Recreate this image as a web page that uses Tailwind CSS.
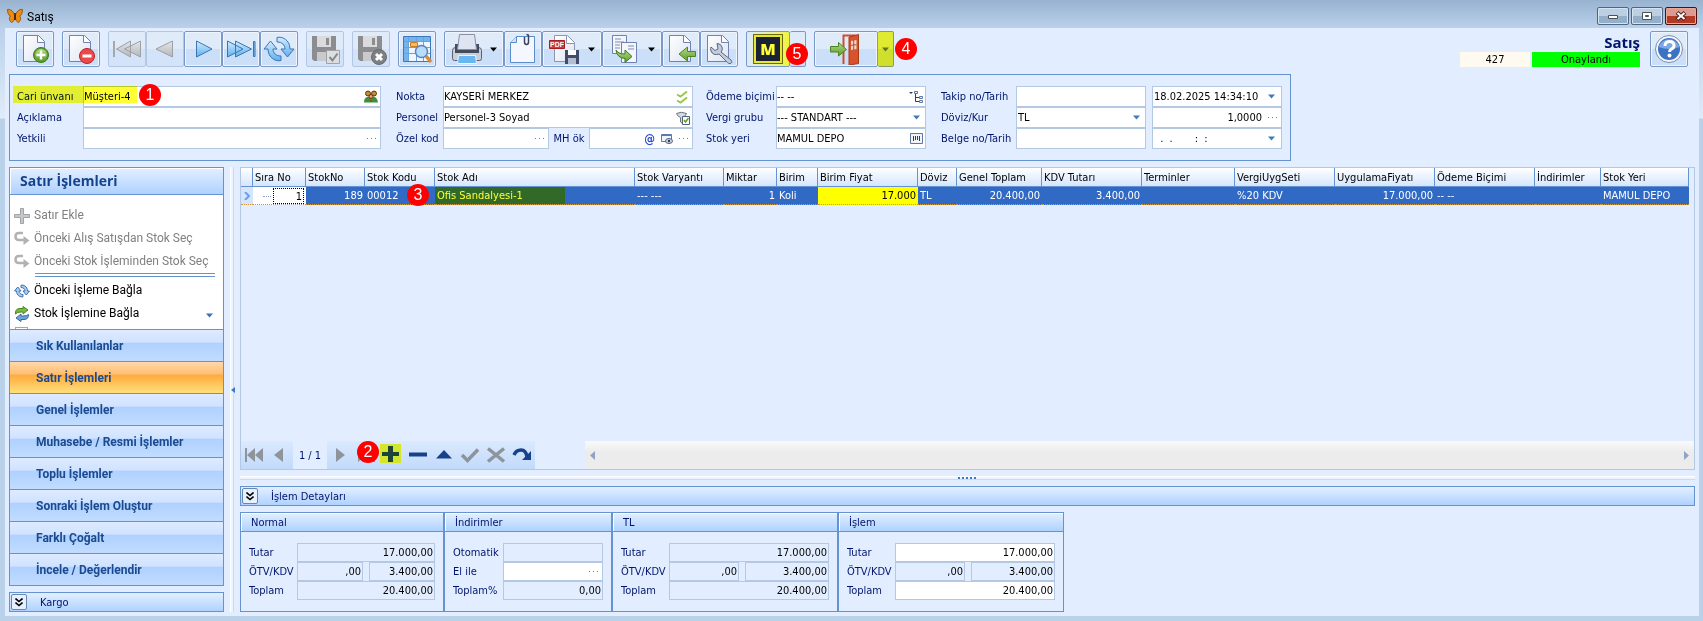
<!DOCTYPE html>
<html lang="tr">
<head>
    <meta charset="UTF-8">
    <meta name="viewport" content="width=device-width, initial-scale=1.0">
    <title>Satış</title>
    <script src="https://cdn.jsdelivr.net/npm/@tailwindcss/browser@4"></script>
</head>
<body class="min-h-screen flex flex-col bg-[linear-gradient(#bad1ea_28px,#dfebf9_118px,#bad1ea_119px)] font-['DejaVu_Sans_Condensed','DejaVu_Sans',sans-serif] text-[11px] leading-4 text-black">
    <!-- Icon definitions used more than once -->
    <svg class="absolute w-0 h-0">
        <defs>
            <linearGradient id="gBlue" x1="0" y1="0" x2="0" y2="1"><stop offset="0" stop-color="#d4ecfd"/><stop offset="1" stop-color="#5cb0ee"/></linearGradient>
            <linearGradient id="gGray" x1="0" y1="0" x2="0" y2="1"><stop offset="0" stop-color="#e4e6e8"/><stop offset="1" stop-color="#b4b7ba"/></linearGradient>
            <linearGradient id="gPage" x1="0" y1="0" x2="1" y2="1"><stop offset="0" stop-color="#ffffff"/><stop offset="1" stop-color="#dde3f0"/></linearGradient>
            <linearGradient id="gGreen" x1="0" y1="0" x2="0" y2="1"><stop offset="0" stop-color="#b5dc86"/><stop offset="1" stop-color="#5c9a2c"/></linearGradient>
            <symbol id="page" viewBox="0 0 32 32"><path d="M4.500 2.500h15l6 6v20h-21z" fill="url(#gPage)" stroke="#6f82b0"/><path d="M18.500 2.500v7h7" fill="#fff" stroke="#6f82b0"/></symbol>
            <symbol id="down" viewBox="0 0 7 5"><path d="M0 0.500h7L3.500 4.500z"/></symbol>
            <symbol id="dots" viewBox="0 0 9 3"><path d="M0 1h1v1h-1zM4 1h1v1h-1zM8 1h1v1h-1z"/></symbol>
            <symbol id="chev" viewBox="0 0 8 9"><path d="M0.500 0.500l3.500 3 3.500-3M0.500 4.500l3.500 3 3.500-3" fill="none" stroke="#000" stroke-width="1.600"/></symbol>
            <symbol id="disk" viewBox="0 0 32 32"><path d="M3 3h24v25H5l-2-2z" fill="#8b8d90"/><path d="M8 3h14v11H8z" fill="#d9dbdd"/><path d="M17 5h3v7h-3z" fill="#8b8d90"/><path d="M8 19h15v9H8z" fill="#c8cacc"/></symbol>
        </defs>
    </svg>

    <!-- Title bar -->
    <header class="h-7 flex items-center justify-between pl-[7px] pr-1 bg-linear-to-b from-[#98b3d0] to-[#bad1ea]">
        <div class="flex items-center gap-1 pt-1">
            <svg class="w-4 h-4" viewBox="0 0 16 16"><path d="M7.500 7C6 2 2 1 0.500 1.500c0 3 1 6 3 6.500-2 1.500-1 5 1 6.500 2-0.500 3-3 3-5zM8.500 7c1.500-5 5.500-6 7-5.500 0 3-1 6-3 6.500 2 1.500 1 5-1 6.500-2-0.500-3-3-3-5z" fill="#ee8c10" stroke="#8a4504" stroke-width="0.800"/><path d="M8 5v7" stroke="#3a1a00" stroke-width="1.500"/></svg>
            <h1 class="font-['Roboto',sans-serif] text-xs pt-0.5">Satış</h1>
        </div>
        <div class="flex gap-0.5 pt-1 pr-0.5">
            <button aria-label="Küçült" class="w-8 h-[18px] flex items-center justify-center rounded-xs border border-[#4f6580] shadow-[inset_0_0_0_1px_#d5e3f2] bg-linear-to-b from-[#bccfe3] from-50% to-[#93afca] to-50%"><svg class="w-3 h-2" viewBox="0 0 12 8"><path d="M1.500 3.500h9v3h-9z" fill="#fff" stroke="#4c5156"/></svg></button>
            <button aria-label="Ekranı kapla" class="w-8 h-[18px] flex items-center justify-center rounded-xs border border-[#4f6580] shadow-[inset_0_0_0_1px_#d5e3f2] bg-linear-to-b from-[#bccfe3] from-50% to-[#93afca] to-50%"><svg class="w-3 h-3" viewBox="0 0 12 12"><path d="M1.500 2.500h9v7h-9z" fill="#fff" stroke="#4c5156"/><path d="M4.500 5.500h3v1h-3z" fill="none" stroke="#4c5156"/></svg></button>
            <button aria-label="Kapat" class="w-8 h-[18px] flex items-center justify-center rounded-xs border border-[#4b1010] shadow-[inset_0_0_0_1px_#e9a79b] bg-linear-to-b from-[#dd9a8e] from-50% to-[#b23a23] to-50%"><svg class="w-3 h-3" viewBox="0 0 12 12"><path d="M2 2.500l8 7M10 2.500l-8 7" stroke="#4b2020" stroke-width="4"/><path d="M2.500 3l7 6M9.500 3l-7 6" stroke="#fff" stroke-width="2"/></svg></button>
        </div>
    </header>

    <main class="flex-1 flex flex-col mx-[5px] mb-[5px] mr-1 px-1 bg-[#e2eeff]">
        <!-- Toolbar -->
        <div class="flex items-start justify-between pt-[3px] pl-[7px] pr-[7px]">
            <div class="flex gap-2">
                <button aria-label="Yeni" class="w-[38px] h-9 flex items-center justify-center rounded-xs border border-[#7b99c6] shadow-[inset_0_0_0_1px_#eef5ff] bg-linear-to-b from-[#e0ebfa] from-50% to-[#cbdff9] to-50%">
                    <svg class="w-8 h-8" viewBox="0 0 32 32"><use href="#page"/><circle cx="22" cy="22" r="7.500" fill="#5da032" stroke="#3d7a18"/><circle cx="22" cy="22" r="6" fill="url(#gGreen)"/><path d="M22 17.500v9M17.500 22h9" stroke="#fff" stroke-width="2.500"/></svg>
                </button>
                <button aria-label="Sil" class="w-[38px] h-9 flex items-center justify-center rounded-xs border border-[#7b99c6] shadow-[inset_0_0_0_1px_#eef5ff] bg-linear-to-b from-[#e0ebfa] from-50% to-[#cbdff9] to-50%">
                    <svg class="w-8 h-8" viewBox="0 0 32 32"><use href="#page"/><circle cx="22" cy="23" r="7.500" fill="#ea4a4a" stroke="#c02020"/><path d="M17.500 23h9" stroke="#fff" stroke-width="3"/></svg>
                </button>
                <div class="flex">
                    <button aria-label="İlk" class="w-[38px] h-9 flex items-center justify-center rounded-xs border border-[#b4c7e2] bg-linear-to-b from-[#e0ebfa] from-50% to-[#d3e3fa] to-50%">
                        <svg class="w-8 h-8" viewBox="0 0 32 32"><path d="M2 8h2v16h-2z" fill="#a5a8ab"/><path d="M19.500 8v16L5.500 16zM29.500 8v16L13.500 16z" fill="url(#gGray)" stroke="#9da0a3"/></svg>
                    </button>
                    <button aria-label="Önceki" class="w-[38px] h-9 flex items-center justify-center rounded-xs border border-[#b4c7e2] bg-linear-to-b from-[#e0ebfa] from-50% to-[#d3e3fa] to-50%">
                        <svg class="w-8 h-8" viewBox="0 0 32 32"><path d="M23.500 8v16L7 16z" fill="url(#gGray)" stroke="#9da0a3"/></svg>
                    </button>
                    <button aria-label="Sonraki" class="w-[38px] h-9 flex items-center justify-center rounded-xs border border-[#7b99c6] shadow-[inset_0_0_0_1px_#eef5ff] bg-linear-to-b from-[#e0ebfa] from-50% to-[#cbdff9] to-50%">
                        <svg class="w-8 h-8" viewBox="0 0 32 32"><path d="M9.500 8v16L25 16z" fill="url(#gBlue)" stroke="#3c74b4"/></svg>
                    </button>
                    <button aria-label="Son" class="w-[38px] h-9 flex items-center justify-center rounded-xs border border-[#7b99c6] shadow-[inset_0_0_0_1px_#eef5ff] bg-linear-to-b from-[#e0ebfa] from-50% to-[#cbdff9] to-50%">
                        <svg class="w-8 h-8" viewBox="0 0 32 32"><path d="M2.500 8v16L18 16zM10.500 8v16L26.500 16z" fill="url(#gBlue)" stroke="#3c74b4"/><path d="M28.500 8.500h1.500v15h-1.500z" fill="#8cc6f2" stroke="#3c74b4"/></svg>
                    </button>
                    <button aria-label="Yenile" class="w-[38px] h-9 flex items-center justify-center rounded-xs border border-[#7b99c6] shadow-[inset_0_0_0_1px_#eef5ff] bg-linear-to-b from-[#e0ebfa] from-50% to-[#cbdff9] to-50%">
                        <svg class="w-8 h-8" viewBox="0 0 32 32"><g fill="url(#gBlue)" stroke="#3c74b4"><path d="M14 4.500C19 3 27 7 27 16h4l-6.500 8L18 16h4c0-4-3-7-8-7z"/><path d="M18 27.500C13 29 5 25 5 16H1L7.500 8 14 16h-4c0 4 3 7 8 7z"/></g></svg>
                    </button>
                </div>
                <button aria-label="Kaydet" class="w-[38px] h-9 flex items-center justify-center rounded-xs border border-[#b4c7e2] bg-linear-to-b from-[#e0ebfa] from-50% to-[#d3e3fa] to-50%">
                    <svg class="w-8 h-8" viewBox="0 0 32 32"><use href="#disk"/><path d="M17.500 17.500h13v13h-13z" fill="#dcdee0" stroke="#a0a3a6"/><path d="M20.500 24l3 3.500 5-7" fill="none" stroke="#85888b" stroke-width="2"/></svg>
                </button>
                <button aria-label="Vazgeç" class="w-[38px] h-9 flex items-center justify-center rounded-xs border border-[#b4c7e2] bg-linear-to-b from-[#e0ebfa] from-50% to-[#d3e3fa] to-50%">
                    <svg class="w-8 h-8" viewBox="0 0 32 32"><use href="#disk"/><circle cx="24" cy="24" r="7.500" fill="#7d8083" stroke="#696c6f"/><path d="M21 21l6 6M27 21l-6 6" stroke="#fff" stroke-width="3"/></svg>
                </button>
                <button aria-label="Liste" class="w-[38px] h-9 flex items-center justify-center rounded-xs border border-[#7b99c6] shadow-[inset_0_0_0_1px_#eef5ff] bg-linear-to-b from-[#e0ebfa] from-50% to-[#cbdff9] to-50%">
                    <svg class="w-8 h-8" viewBox="0 0 32 32"><path d="M2.500 3.500h27v25h-27z" fill="#eef6ff" stroke="#3d78bd"/><path d="M3 4h26v4H3zM3 8h4v20H3z" fill="#72b4ee"/><path d="M3 8.500h26M3 14.500h26M3 20.500h26M7.500 4v24M15.500 4v24M22.500 4v24" stroke="#6ba2dc"/><path d="M9.500 9.500h7v4h-7z" fill="#f8bd62" stroke="#c8801c"/><path d="M25 23l5 6" stroke="#d98c32" stroke-width="3.500"/><circle cx="20.500" cy="18.500" r="6" fill="#b8dcfb" stroke="#5a83c0" stroke-width="1.500"/></svg>
                </button>
                <div class="flex">
                    <button aria-label="Yazdır" class="w-[60px] h-9 flex items-center justify-between pl-1.5 pr-1.5 rounded-xs border border-[#7b99c6] shadow-[inset_0_0_0_1px_#eef5ff] bg-linear-to-b from-[#e0ebfa] from-50% to-[#cbdff9] to-50%">
                        <svg class="w-8 h-8" viewBox="0 0 32 32"><path d="M1.500 17.500q0-3 3-3h23q3 0 3 3v8q0 2-2 2h-25q-2 0-2-2z" fill="#c9cfda" stroke="#5a6070"/><path d="M4 11h24v9H4z" fill="#434b5e"/><path d="M8.500 1.500h15l2 15H6.500z" fill="#dfe5f0" stroke="#8890a8"/><path d="M7.500 22.500h17l1 8h-19z" fill="#68b6f2" stroke="#eaf2fc"/></svg>
                        <svg class="w-[7px] h-[5px]" viewBox="0 0 7 5"><use href="#down"/></svg>
                    </button>
                    <button aria-label="Ekler" class="w-[38px] h-9 flex items-center justify-center rounded-xs border border-[#7b99c6] shadow-[inset_0_0_0_1px_#eef5ff] bg-linear-to-b from-[#e0ebfa] from-50% to-[#cbdff9] to-50%">
                        <svg class="w-8 h-8" viewBox="0 0 32 32"><path d="M9.500 3.500h18v26h-24v-20z" fill="#f4f8fe" stroke="#5b8ccb"/><path d="M3.500 9.500h6v-6" fill="#cfe2f8" stroke="#5b8ccb"/><path d="M17.500 4v5q0 2.500 2 2.500t2-2.500V3q0-1.500-2-1.500" fill="none" stroke="#39435c" stroke-width="1.500"/></svg>
                    </button>
                    <button aria-label="PDF kaydet" class="w-[60px] h-9 flex items-center justify-between pl-1 pr-1.5 rounded-xs border border-[#7b99c6] shadow-[inset_0_0_0_1px_#eef5ff] bg-linear-to-b from-[#e0ebfa] from-50% to-[#cbdff9] to-50%">
                        <svg class="w-8 h-8" viewBox="0 0 32 32"><path d="M7.500 2.500h13l7 7v19h-20z" fill="url(#gPage)" stroke="#8a96b4"/><path d="M19.500 2.500v8h8" fill="#fff" stroke="#8a96b4"/><path d="M2.500 7.500h15v8h-15z" fill="#d23c38" stroke="#a81e1e"/><text x="3" y="14" font-size="7" font-weight="bold" fill="#fff" font-family="Liberation Sans">PDF</text><path d="M18 17h14v14H18z" fill="#3f4c6c"/><path d="M21 17h8v5h-8z" fill="#fff"/><path d="M21 25h8v6h-8z" fill="#b4bdd0"/></svg>
                        <svg class="w-[7px] h-[5px]" viewBox="0 0 7 5"><use href="#down"/></svg>
                    </button>
                    <button aria-label="Kopyala" class="w-[60px] h-9 flex items-center justify-between pl-1.5 pr-1.5 rounded-xs border border-[#7b99c6] shadow-[inset_0_0_0_1px_#eef5ff] bg-linear-to-b from-[#e0ebfa] from-50% to-[#cbdff9] to-50%">
                        <svg class="w-8 h-8" viewBox="0 0 32 32"><path d="M3.500 2.500h14v18h-14z" fill="#f3f6fc" stroke="#6f82b0"/><path d="M6 6h6M6 9h9M6 12h5M6 15h5" stroke="#7d8db5"/><path d="M12.500 9.500h15v20h-15z" fill="#f3f6fc" stroke="#6f82b0"/><path d="M19 13h6M19 16h6" stroke="#7d8db5"/><path d="M7 17q2 4 9 4v-4l7 6.500-7 6v-4Q8 25 7 17z" fill="url(#gGreen)" stroke="#3f7a1e"/></svg>
                        <svg class="w-[7px] h-[5px]" viewBox="0 0 7 5"><use href="#down"/></svg>
                    </button>
                    <button aria-label="Geri al" class="w-[38px] h-9 flex items-center justify-center rounded-xs border border-[#7b99c6] shadow-[inset_0_0_0_1px_#eef5ff] bg-linear-to-b from-[#e0ebfa] from-50% to-[#cbdff9] to-50%">
                        <svg class="w-8 h-8" viewBox="0 0 32 32"><use href="#page"/><path d="M30.500 18.500v5h-8v4.500L14 21l8.500-7v4.500z" fill="url(#gGreen)" stroke="#4a8524"/></svg>
                    </button>
                    <button aria-label="Ayarlar" class="w-[38px] h-9 flex items-center justify-center rounded-xs border border-[#7b99c6] shadow-[inset_0_0_0_1px_#eef5ff] bg-linear-to-b from-[#e0ebfa] from-50% to-[#cbdff9] to-50%">
                        <svg class="w-8 h-8" viewBox="0 0 32 32"><use href="#page"/><path d="M14 10.500q4 0 5 3.500t-1 5l10 8q2 3-1 3.500-2 0-2.500-1L16 21q-6 2-8-3-1-3 0-4l4 3.500 3-1.500-.5-3z" fill="#c3ccdb" stroke="#5b6880"/></svg>
                    </button>
                </div>
                <!-- M button with its drop-down half -->
                <div class="relative flex">
                    <button aria-label="M" class="w-11 h-9 flex items-center justify-center rounded-xs border border-[#7b99c6] bg-linear-to-r from-[#dde9fb] from-1 to-[#f0f42c] to-1">
                        <span class="w-[30px] h-[30px] flex items-center justify-center border border-[#6b6c10] bg-[#1a2233] outline-2 -outline-offset-3 outline-[#e8e830] font-['Noto_Sans',sans-serif] text-base font-black text-[#ffff33]">M</span>
                    </button>
                    <button aria-label="M seçenekleri" class="w-4 h-9 rounded-xs border border-l-0 border-[#7b99c6] bg-linear-to-b from-[#e0ebfa] from-50% to-[#cbdff9] to-50%"></button>
                    <span class="absolute left-10 top-3 w-[22px] h-[22px] rounded-full bg-[#ff0000] text-white text-base leading-[22px] text-center font-['Liberation_Sans',sans-serif]">5</span>
                </div>
                <!-- Exit button with its drop-down half -->
                <div class="relative flex">
                    <button aria-label="Çıkış" class="w-16 h-9 flex items-center justify-end pr-4 rounded-xs border border-[#7b99c6] shadow-[inset_0_0_0_1px_#eef5ff] bg-linear-to-b from-[#e0ebfa] from-50% to-[#cbdff9] to-50%">
                        <svg class="w-8 h-8" viewBox="0 0 32 32"><path d="M14.500 31V2.500h12" fill="none" stroke="#c9502c" stroke-width="2"/><path d="M20 4l9.500-2.500v29L20 32z" fill="#d9522c" stroke="#a83a18"/><path d="M22 8l5.500-1v9L22 17z" fill="#f2d8c8"/><path d="M24.700 7v10M22 12.300l5.500-.6" stroke="#b8472a"/><path d="M1.500 13.500h8V9.500L17.500 16.500 9.500 23v-4h-8z" fill="url(#gGreen)" stroke="#4a8524"/></svg>
                    </button>
                    <button aria-label="Çıkış seçenekleri" class="w-4 h-9 flex items-center justify-center rounded-xs border border-l-0 border-[#8a9a60] bg-linear-to-b from-[#e0ea30] from-50% to-[#cfe02c] to-50%"><svg class="w-[7px] h-[5px] fill-[#5c7330]" viewBox="0 0 7 5"><use href="#down"/></svg></button>
                    <span class="absolute left-[81px] top-[7px] w-[22px] h-[22px] rounded-full bg-[#ff0000] text-white text-base leading-[22px] text-center font-['Liberation_Sans',sans-serif]">4</span>
                </div>
            </div>

            <!-- Document state and help -->
            <div class="flex gap-2.5">
                <div class="flex flex-col items-end pt-0.5">
                    <h2 class="font-['Open_Sans',sans-serif] text-[15px] leading-[19px] font-bold text-[#00146e]">Satış</h2>
                    <div class="flex gap-0.5">
                        <span class="w-[70px] h-[15px] leading-4 text-center bg-[#fffaf0]">427</span>
                        <span class="w-[108px] h-[15px] leading-4 text-center bg-[#00ff00]">Onaylandı</span>
                    </div>
                </div>
                <button aria-label="Yardım" class="w-[38px] h-9 flex items-center justify-center rounded-xs border border-[#7b99c6] shadow-[inset_0_0_0_1px_#eef5ff] bg-linear-to-b from-[#e0ebfa] from-50% to-[#cbdff9] to-50%">
                    <svg class="w-8 h-8" viewBox="0 0 32 32"><circle cx="16" cy="16" r="13.500" fill="#f4f7fc" stroke="#7c8db0"/><circle cx="16" cy="16" r="11" fill="#3c72c4"/><path d="M5.500 14a11 11 0 0 1 21 0q-10 4-21 0z" fill="#7da8e4"/><path d="M12 13q0-4.500 4.500-4.500T21 12.500q0 2.500-2.500 3.500-2 1-2 3" fill="none" stroke="#fff" stroke-width="3"/><circle cx="16.500" cy="22.500" r="2" fill="#fff"/></svg>
                </button>
            </div>
        </div>

        <!-- Document header form -->
        <form class="self-start mt-[7px] h-[87px] flex gap-[15px] border border-[#6593cf] pt-[11px] pl-[7px] pr-2">
            <div class="relative grid grid-cols-[66px_298px] auto-rows-[21px] content-start items-center">
                <label for="cari" class="text-[#00146e]">Cari ünvanı</label>
                <div class="h-[21px] flex items-center border border-[#b4c8e4] bg-white pr-0.5">
                    <input id="cari" value="Müşteri-4" class="flex-1 min-w-0 outline-none">
                    <svg class="w-[14px] h-[14px]" viewBox="0 0 14 14"><circle cx="4" cy="3.500" r="2.500" fill="#c98a3c" stroke="#5a3a10"/><circle cx="10" cy="3.500" r="2.500" fill="#c98a3c" stroke="#5a3a10"/><path d="M0 12.500q0-5.500 4-5.500t3 5.500zM7 12.500q0-5.500 3-5.500t4 5.500z" fill="#3f8f3a"/><circle cx="7" cy="6.500" r="2" fill="#e0a85a" stroke="#5a3a10"/><path d="M6 12q0-3 1-3t1 3z" fill="#b23c2c"/></svg>
                </div>
                <label for="aciklama" class="text-[#00146e]">Açıklama</label>
                <input id="aciklama" class="h-[21px] border border-[#b4c8e4] bg-white outline-none">
                <label for="yetkili" class="text-[#00146e]">Yetkili</label>
                <div class="h-[21px] flex items-center border border-[#b4c8e4] bg-white pr-1">
                    <input id="yetkili" class="flex-1 min-w-0 outline-none">
                    <svg class="w-[9px] h-[3px] fill-[#5d7fb5]" viewBox="0 0 9 3"><use href="#dots"/></svg>
                </div>
                <!-- Highlighter over the customer field -->
                <span class="absolute -left-1 top-0 w-[124px] h-[17px] bg-[#ffff33] mix-blend-multiply"></span>
                <span class="absolute left-[122px] -top-[2px] w-[22px] h-[22px] rounded-full bg-[#ff0000] text-white text-base leading-[22px] text-center font-['Liberation_Sans',sans-serif]">1</span>
            </div>

            <div class="grid grid-cols-[47px_250px] auto-rows-[21px] content-start items-center">
                <label for="nokta" class="text-[#00146e]">Nokta</label>
                <div class="h-[21px] flex items-center border border-[#b4c8e4] bg-white pr-1">
                    <input id="nokta" value="KAYSERİ MERKEZ" class="flex-1 min-w-0 outline-none">
                    <svg class="w-3 h-[14px]" viewBox="0 0 12 14"><path d="M1 4.500l3.500 2L11 1.500M1 10.500l3.500 2L11 7.500" fill="none" stroke="#9cc552" stroke-width="2"/></svg>
                </div>
                <label for="personel" class="text-[#00146e]">Personel</label>
                <div class="h-[21px] flex items-center border border-[#b4c8e4] bg-white pr-0.5">
                    <input id="personel" value="Personel-3 Soyad" class="flex-1 min-w-0 outline-none">
                    <svg class="w-[14px] h-[14px]" viewBox="0 0 14 14"><path d="M0.500 2.500Q5 0 10.500 2.500 10 5 6.500 6.500v6L4.500 11V6.500Q1 5 0.500 2.500z" fill="#d8dce2" stroke="#6d7480"/><path d="M6.500 5.500h7v8h-7z" fill="#fff" stroke="#50617c"/><path d="M8 9l1.500 2 3-4" fill="none" stroke="#5fa01f" stroke-width="1.500"/></svg>
                </div>
                <label for="ozelkod" class="text-[#00146e]">Özel kod</label>
                <div class="flex items-center justify-between">
                    <div class="w-[106px] h-[21px] flex items-center border border-[#b4c8e4] bg-white pr-1">
                        <input id="ozelkod" class="flex-1 min-w-0 outline-none">
                        <svg class="w-[9px] h-[3px] fill-[#5d7fb5]" viewBox="0 0 9 3"><use href="#dots"/></svg>
                    </div>
                    <label for="mhok" class="text-[#00146e]">MH ök</label>
                    <div class="w-[104px] h-[21px] flex items-center gap-[6px] border border-[#b4c8e4] bg-white pr-1">
                        <input id="mhok" class="flex-1 min-w-0 outline-none">
                        <span class="text-xs font-bold text-[#2a4bd0]">@</span>
                        <svg class="w-3 h-3" viewBox="0 0 12 12"><path d="M0.500 1.500h10v7h-10z" fill="#eef4fc" stroke="#5c7ba8"/><path d="M1 1h9v2H1z" fill="#5c7ba8"/><ellipse cx="8" cy="8" rx="3.500" ry="2.500" fill="#d0d8e4" stroke="#4d6484"/><circle cx="8" cy="8" r="1.200" fill="#30405c"/></svg>
                        <svg class="w-[9px] h-[3px] fill-[#5d7fb5]" viewBox="0 0 9 3"><use href="#dots"/></svg>
                    </div>
                </div>
            </div>

            <div class="-ml-0.5 grid grid-cols-[70px_150px] auto-rows-[21px] content-start items-center">
                <label for="odeme" class="text-[#00146e] whitespace-nowrap">Ödeme biçimi</label>
                <div class="h-[21px] flex items-center border border-[#b4c8e4] bg-white pr-0.5">
                    <input id="odeme" value="-- --" class="flex-1 min-w-0 outline-none">
                    <svg class="w-[14px] h-[14px]" viewBox="0 0 14 14"><path d="M0 2h4L2 4z" fill="#33405c"/><path d="M6.500 4v7.500H10M6.500 7.500H10" fill="none" stroke="#33405c"/><path d="M5.500 1.500h3v2h-3zM10.500 6.500h3v2h-3zM10.500 10.500h3v2h-3z" fill="#e4ecf8" stroke="#6078a8"/></svg>
                </div>
                <label for="vergi" class="text-[#00146e]">Vergi grubu</label>
                <div class="relative h-[21px]">
                    <select id="vergi" class="w-full h-full appearance-none border border-[#b4c8e4] bg-white outline-none"><option>--- STANDART ---</option></select>
                    <svg class="absolute right-1.5 top-2 w-[7px] h-[5px] fill-[#4478b8] pointer-events-none" viewBox="0 0 7 5"><use href="#down"/></svg>
                </div>
                <label for="stokyeri" class="text-[#00146e]">Stok yeri</label>
                <div class="h-[21px] flex items-center border border-[#b4c8e4] bg-white pr-0.5">
                    <input id="stokyeri" value="MAMUL DEPO" class="flex-1 min-w-0 outline-none">
                    <svg class="w-[13px] h-[11px]" viewBox="0 0 13 11"><path d="M0.500 0.500h12v10h-12z" fill="#f0f4fa" stroke="#6078a0"/><path d="M3.500 3v5M5.500 3v4M7.500 3v4M9.500 3v5" stroke="#303c58"/></svg>
                </div>
            </div>

            <div class="grid grid-cols-[75px_130px_136px] auto-rows-[21px] content-start items-center">
                <label for="takip" class="text-[#00146e]">Takip no/Tarih</label>
                <input id="takip" class="h-[21px] w-[130px] border border-[#b4c8e4] bg-white outline-none">
                <div class="ml-1.5 h-[21px] flex items-center border border-[#b4c8e4] bg-white pl-px pr-1.5">
                    <input aria-label="Takip tarihi" value="18.02.2025 14:34:10" class="flex-1 min-w-0 outline-none">
                    <svg class="w-[7px] h-[5px] fill-[#4478b8]" viewBox="0 0 7 5"><use href="#down"/></svg>
                </div>
                <label for="doviz" class="text-[#00146e]">Döviz/Kur</label>
                <div class="relative h-[21px]">
                    <select id="doviz" class="w-full h-full pl-px appearance-none border border-[#b4c8e4] bg-white outline-none"><option>TL</option></select>
                    <svg class="absolute right-1.5 top-2 w-[7px] h-[5px] fill-[#4478b8] pointer-events-none" viewBox="0 0 7 5"><use href="#down"/></svg>
                </div>
                <div class="ml-1.5 h-[21px] flex items-center gap-1.5 border border-[#b4c8e4] bg-white pr-1">
                    <input aria-label="Kur" value="1,0000" class="flex-1 min-w-0 text-right outline-none">
                    <svg class="w-[9px] h-[3px] fill-[#5d7fb5]" viewBox="0 0 9 3"><use href="#dots"/></svg>
                </div>
                <label for="belge" class="text-[#00146e] whitespace-nowrap">Belge no/Tarih</label>
                <input id="belge" class="h-[21px] w-[130px] border border-[#b4c8e4] bg-white outline-none">
                <div class="ml-1.5 h-[21px] flex items-center border border-[#b4c8e4] bg-white pl-1 pr-1.5">
                    <input aria-label="Belge tarihi" value=" .  .       :  :" class="flex-1 min-w-0 outline-none">
                    <svg class="w-[7px] h-[5px] fill-[#4478b8]" viewBox="0 0 7 5"><use href="#down"/></svg>
                </div>
            </div>
        </form>

        <div class="flex-1 flex mt-1.5 pb-1">
            <!-- Sidebar -->
            <aside class="w-[215px] flex flex-col gap-1.5 shrink-0">
                <div class="flex-1 flex flex-col border border-[#6593cf] font-['Roboto','Noto_Sans',sans-serif]">
                    <h3 class="h-[27px] pl-2.5 leading-[26px] text-sm font-bold font-['Open_Sans',sans-serif] text-[#15428b] border-b border-[#6593cf] shadow-[inset_1px_1px_0_#fff] bg-linear-to-b from-[#e3efff] to-[#afd2ff]">Satır İşlemleri</h3>
                    <div class="h-[134px] overflow-hidden bg-white pt-[9px] pl-1 text-xs leading-[23px]">
                        <a href="#" class="flex items-center gap-1 text-[#808080]"><svg class="w-4 h-4" viewBox="0 0 16 16"><path d="M6.500 0.500h3v6h6v3h-6v6h-3v-6h-6v-3h6z" fill="#c6c8ca" stroke="#a0a2a4"/></svg>Satır Ekle</a>
                        <a href="#" class="flex items-center gap-1 text-[#808080]"><svg class="w-4 h-4" viewBox="0 0 16 16"><path d="M9 2H5Q1.500 2 1.500 5.500T5 9h5" fill="none" stroke="#b0b2b4" stroke-width="2.500"/><path d="M9.500 5l6 4.500-6 4.500z" fill="#b0b2b4"/></svg>Önceki Alış Satışdan Stok Seç</a>
                        <a href="#" class="flex items-center gap-1 text-[#808080]"><svg class="w-4 h-4" viewBox="0 0 16 16"><path d="M9 2H5Q1.500 2 1.500 5.500T5 9h5" fill="none" stroke="#b0b2b4" stroke-width="2.500"/><path d="M9.500 5l6 4.500-6 4.500z" fill="#b0b2b4"/></svg>Önceki Stok İşleminden Stok Seç</a>
                        <hr class="ml-[21px] mr-2 mb-0.5 h-1 border-y border-[#6593cf]">
                        <a href="#" class="flex items-center gap-1"><svg class="w-4 h-4" viewBox="0 0 32 32"><g fill="#a8d0f4" stroke="#3c70b0" stroke-width="2"><path d="M14 4.500C19 3 27 7 27 16h4l-6.500 8L18 16h4c0-4-3-7-8-7z"/><path d="M18 27.500C13 29 5 25 5 16H1L7.500 8 14 16h-4c0 4 3 7 8 7z"/></g></svg>Önceki İşleme Bağla</a>
                        <div class="flex items-center justify-between pr-2.5">
                            <a href="#" class="flex items-center gap-1"><svg class="w-4 h-4" viewBox="0 0 16 16"><path d="M1.500 7q0-4.500 4.500-4.500h3V0.500l5 3.500-5 4v-2H7Q3 6 1.500 8z" fill="#7cb83c" stroke="#4a8524"/><path d="M14.500 8.500q0 5-4.500 5H7v2L2 12l5-4v2h2q4 0 5.500-1.500z" fill="#6fa4da" stroke="#3a669c"/></svg>Stok İşlemine Bağla</a>
                            <svg class="w-[7px] h-[5px] mt-1 fill-[#3d70b8]" viewBox="0 0 7 5"><use href="#down"/></svg>
                        </div>
                        <span class="ml-px mt-0.5 block w-[13px] h-3 border border-[#9aa8bd]"></span>
                    </div>
                    <nav class="flex-1 flex flex-col text-xs font-bold text-[#1b4a90]">
                        <a href="#" class="h-8 pl-[26px] leading-8 border-t border-[#6593cf] bg-[linear-gradient(#deebff_0%,#cfe2ff_40%,#aed1ff_41%,#c1dcff_100%)]">Sık Kullanılanlar</a>
                        <a href="#" class="h-8 pl-[26px] leading-8 border-t border-[#6593cf] bg-[linear-gradient(#ffd8aa_0%,#ffbd70_40%,#ffa93a_41%,#ffe07c_100%)]">Satır İşlemleri</a>
                        <a href="#" class="h-8 pl-[26px] leading-8 border-t border-[#6593cf] bg-[linear-gradient(#deebff_0%,#cfe2ff_40%,#aed1ff_41%,#c1dcff_100%)]">Genel İşlemler</a>
                        <a href="#" class="h-8 pl-[26px] leading-8 border-t border-[#6593cf] bg-[linear-gradient(#deebff_0%,#cfe2ff_40%,#aed1ff_41%,#c1dcff_100%)]">Muhasebe / Resmi İşlemler</a>
                        <a href="#" class="h-8 pl-[26px] leading-8 border-t border-[#6593cf] bg-[linear-gradient(#deebff_0%,#cfe2ff_40%,#aed1ff_41%,#c1dcff_100%)]">Toplu İşlemler</a>
                        <a href="#" class="h-8 pl-[26px] leading-8 border-t border-[#6593cf] bg-[linear-gradient(#deebff_0%,#cfe2ff_40%,#aed1ff_41%,#c1dcff_100%)]">Sonraki İşlem Oluştur</a>
                        <a href="#" class="h-8 pl-[26px] leading-8 border-t border-[#6593cf] bg-[linear-gradient(#deebff_0%,#cfe2ff_40%,#aed1ff_41%,#c1dcff_100%)]">Farklı Çoğalt</a>
                        <a href="#" class="h-8 pl-[26px] leading-8 border-t border-[#6593cf] bg-[linear-gradient(#deebff_0%,#cfe2ff_40%,#aed1ff_41%,#c1dcff_100%)]">İncele / Değerlendir</a>
                    </nav>
                </div>
                <div class="h-5 flex items-center gap-[13px] pl-px border border-[#6593cf] bg-linear-to-b from-[#e3efff] to-[#afd2ff] text-[#00146e]">
                    <button aria-label="Kargo aç" class="w-4 h-4 flex items-center justify-center rounded-xs border border-[#6b86ac] bg-[#e6f0ff]"><svg class="w-2 h-[9px]" viewBox="0 0 8 9"><use href="#chev"/></svg></button>
                    <span class="pt-px">Kargo</span>
                </div>
            </aside>

            <!-- Vertical splitter -->
            <div class="w-4 flex items-center shrink-0 pl-1.5">
                <div class="w-1 h-full flex items-center border-x border-l-white border-r-[#c3daf9] bg-[#edf4ff]"><svg class="w-1 h-1.5 shrink-0" viewBox="0 0 4 6"><path d="M4 0v6L0 3z" fill="#3d78c8"/></svg></div>
            </div>

            <section class="flex-1 min-w-0 flex flex-col">
                <!-- Lines grid -->
                <div class="flex-1 flex flex-col justify-between border border-[#b4c8e4]">
                    <div class="relative">
                        <table class="w-[1448px] table-fixed border-separate border-spacing-0">
                            <colgroup>
                                <col class="w-3"><col class="w-[53px]"><col class="w-[59px]"><col class="w-[70px]"><col class="w-[200px]"><col class="w-[89px]">
                                <col class="w-[53px]"><col class="w-[41px]"><col class="w-[100px]"><col class="w-[39px]"><col class="w-[85px]"><col class="w-[100px]">
                                <col class="w-[93px]"><col class="w-[100px]"><col class="w-[100px]"><col class="w-[100px]"><col class="w-[66px]"><col class="w-[88px]">
                            </colgroup>
                            <thead>
                                <tr class="h-[19px] text-left bg-linear-to-b from-white to-[#d2e4ff] *:border-b *:border-r *:border-[#6593cf] *:p-0 *:pl-0.5 *:pt-0.5 *:font-normal *:whitespace-nowrap">
                                    <th></th><th>Sıra No</th><th>StokNo</th><th>Stok Kodu</th><th>Stok Adı</th><th>Stok Varyantı</th>
                                    <th>Miktar</th><th>Birim</th><th>Birim Fiyat</th><th>Döviz</th><th>Genel Toplam</th><th>KDV Tutarı</th>
                                    <th>Terminler</th><th>VergiUygSeti</th><th>UygulamaFiyatı</th><th>Ödeme Biçimi</th><th>İndirimler</th><th>Stok Yeri</th>
                                </tr>
                            </thead>
                            <tbody>
                                <tr class="h-[18px] bg-[#316ac5] text-white *:p-0 *:px-0.5 *:pt-px *:whitespace-nowrap *:border-b *:border-dotted *:border-[#ce953a]">
                                    <td class="bg-[#d3e5ff]"><svg class="w-2 h-2" viewBox="0 0 8 8"><path d="M2 0l4 4-4 4" fill="none" stroke="#6ba0e8" stroke-width="2"/></svg></td>
                                    <td class="bg-white"><div class="flex items-center pl-2 gap-0.5"><span class="w-2 border-t border-dotted border-[#8ca4c8]"></span><span class="flex-1 h-4 pr-px border border-dotted border-black text-right text-black leading-[15px]">1</span></div></td>
                                    <td class="text-right">189</td><td>00012</td><td class="relative">Ofis Sandalyesi-1<span class="absolute left-0 top-0 w-[130px] h-full bg-[#ffff33] mix-blend-multiply"></span></td><td>--- ---</td>
                                    <td class="text-right">1</td><td>Koli</td><td class="bg-[#ffff00] text-black text-right">17.000</td><td>TL</td><td class="text-right">20.400,00</td><td class="text-right">3.400,00</td>
                                    <td></td><td>%20 KDV</td><td class="text-right">17.000,00</td><td>-- --</td><td></td><td>MAMUL DEPO</td>
                                </tr>
                            </tbody>
                        </table>
                        <span class="absolute left-[166px] top-4 w-[22px] h-[22px] rounded-full bg-[#ff0000] text-white text-base leading-[22px] text-center font-['Liberation_Sans',sans-serif]">3</span>
                    </div>

                    <!-- Record navigator and horizontal scroll bar -->
                    <div class="flex h-7 text-[#00146e]">
                        <div class="relative flex">
                            <div class="flex items-center bg-linear-to-b from-[#dbe9fe] to-[#c1dafa] *:w-[26px] *:h-full *:flex *:items-center *:justify-center">
                                <button aria-label="İlk kayıt"><svg class="w-5 h-4 fill-[#8e949c]" viewBox="0 0 20 16"><path d="M1 1h2v14H1zM11 1v14L3 8zM19 1v14l-8-7z"/></svg></button>
                                <button aria-label="Önceki kayıt"><svg class="w-5 h-4 fill-[#8e949c]" viewBox="0 0 20 16"><path d="M13 1v14L4 8z"/></svg></button>
                            </div>
                            <span class="w-[34px] text-center leading-[29px]">1 / 1</span>
                            <div class="flex items-center bg-linear-to-b from-[#dbe9fe] to-[#c1dafa] *:w-[26px] *:h-full *:flex *:items-center *:justify-center">
                                <button aria-label="Sonraki kayıt"><svg class="w-5 h-4 fill-[#8e949c]" viewBox="0 0 20 16"><path d="M6 1v14l9-7z"/></svg></button>
                                <button aria-label="Son kayıt"><svg class="w-5 h-4 fill-[#8e949c]" viewBox="0 0 20 16"><path d="M2 1v14l8-7zM9 1v14l8-7zM17 1h2v14h-2z"/></svg></button>
                                <button aria-label="Ekle"><span class="w-[21px] h-[19px] mb-1 mr-1 pt-0.5 flex items-center justify-center bg-[#d4e62c]"><svg class="w-[17px] h-4 fill-[#1c4438]" viewBox="0 0 17 16"><path d="M6 0h5v6h6v4h-6v6H6v-6H0V6h6z"/></svg></span></button>
                                <button aria-label="Sil"><svg class="w-5 h-4 fill-[#15428b]" viewBox="0 0 20 16"><path d="M1 5.500h18v4H1z"/></svg></button>
                                <button aria-label="Düzenle"><svg class="w-5 h-4 fill-[#15428b]" viewBox="0 0 20 16"><path d="M10 3l8 8.500H2z"/></svg></button>
                                <button aria-label="Onayla"><svg class="w-5 h-4" viewBox="0 0 20 16"><path d="M2 8l5.500 5.500L18 2.500" fill="none" stroke="#8e949c" stroke-width="3.500"/></svg></button>
                                <button aria-label="İptal"><svg class="w-5 h-4" viewBox="0 0 20 16"><path d="M2 1.500l16 13M18 1.500l-16 13" fill="none" stroke="#8e949c" stroke-width="3.500"/></svg></button>
                                <button aria-label="Tazele"><svg class="w-5 h-4" viewBox="0 0 20 16"><path d="M2 8q2-5 7-5t6 7" fill="none" stroke="#15428b" stroke-width="3.500"/><path d="M10 13h9V4z" fill="#15428b"/></svg></button>
                            </div>
                            <span class="absolute left-[116px] top-0 w-[22px] h-[22px] rounded-full bg-[#ff0000] text-white text-base leading-[22px] text-center font-['Liberation_Sans',sans-serif]">2</span>
                        </div>
                        <div class="flex-1 flex items-center justify-between ml-[50px] px-[5px] bg-linear-to-b from-[#fafafa] to-[#ececec] to-40%">
                            <svg class="w-[5px] h-[9px] fill-[#8fa3c4]" viewBox="0 0 5 9"><path d="M5 0v9L0 4.500z"/></svg>
                            <svg class="w-[5px] h-[9px] fill-[#8fa3c4]" viewBox="0 0 5 9"><path d="M0 0v9l5-4.500z"/></svg>
                        </div>
                    </div>
                </div>

                <!-- Horizontal splitter -->
                <div class="h-4 pt-1.5">
                    <div class="h-1 flex justify-center items-center border-y border-t-white border-b-[#c3daf9] bg-[#edf4ff]"><svg class="w-[19px] h-0.5" viewBox="0 0 19 2"><path d="M0 1h18" stroke="#3d78c8" stroke-width="2" stroke-dasharray="2 2"/></svg></div>
                </div>

                <div class="h-5 flex items-center gap-[13px] pl-px border border-[#6593cf] bg-linear-to-b from-[#e3efff] to-[#afd2ff] text-[#00146e]">
                    <button aria-label="İşlem Detayları aç" class="w-4 h-4 flex items-center justify-center rounded-xs border border-[#6b86ac] bg-[#e6f0ff]"><svg class="w-2 h-[9px]" viewBox="0 0 8 9"><use href="#chev"/></svg></button>
                    <span class="pt-px">İşlem Detayları</span>
                </div>

                <!-- Totals -->
                <div class="flex mt-1.5 h-[100px] text-[#00146e]">
                    <div class="w-[204px] border border-[#6593cf]">
                        <h4 class="h-[19px] pl-2.5 leading-[19px] border-b border-[#6593cf] shadow-[inset_1px_1px_0_#fff] bg-linear-to-b from-[#e3efff] to-[#afd2ff]">Normal</h4>
                        <div class="grid grid-cols-[48px_66px_72px] auto-rows-[19px] items-center pt-[11px] pl-2">
                            <label for="n1">Tutar</label><input id="n1" value="17.000,00" class="col-span-2 h-[19px] px-px border border-[#b4c8e4] text-black text-right outline-none">
                            <label for="n2">ÖTV/KDV</label><input id="n2" value=",00" class="h-[19px] px-px border border-[#b4c8e4] text-black text-right outline-none"><input aria-label="KDV" value="3.400,00" class="ml-1.5 w-[66px] h-[19px] px-px border border-[#b4c8e4] text-black text-right outline-none">
                            <label for="n3">Toplam</label><input id="n3" value="20.400,00" class="col-span-2 h-[19px] px-px border border-[#b4c8e4] text-black text-right outline-none">
                        </div>
                    </div>
                    <div class="w-[168px] border border-[#6593cf]">
                        <h4 class="h-[19px] pl-2.5 leading-[19px] border-b border-[#6593cf] shadow-[inset_1px_1px_0_#fff] bg-linear-to-b from-[#e3efff] to-[#afd2ff]">İndirimler</h4>
                        <div class="grid grid-cols-[50px_100px] auto-rows-[19px] items-center pt-[11px] pl-2">
                            <label for="i1">Otomatik</label><input id="i1" class="h-[19px] px-px border border-[#b4c8e4] text-black text-right outline-none">
                            <label for="i2">El ile</label>
                            <div class="h-[19px] flex items-center pr-1 border border-[#b4c8e4] bg-white"><input id="i2" class="flex-1 min-w-0 outline-none"><svg class="w-[9px] h-[3px] fill-[#5d7fb5]" viewBox="0 0 9 3"><use href="#dots"/></svg></div>
                            <label for="i3">Toplam%</label><input id="i3" value="0,00" class="h-[19px] px-px border border-[#b4c8e4] text-black text-right outline-none">
                        </div>
                    </div>
                    <div class="w-[226px] border border-[#6593cf]">
                        <h4 class="h-[19px] pl-2.5 leading-[19px] border-b border-[#6593cf] shadow-[inset_1px_1px_0_#fff] bg-linear-to-b from-[#e3efff] to-[#afd2ff]">TL</h4>
                        <div class="grid grid-cols-[48px_70px_90px] auto-rows-[19px] items-center pt-[11px] pl-2">
                            <label for="t1">Tutar</label><input id="t1" value="17.000,00" class="col-span-2 h-[19px] px-px border border-[#b4c8e4] text-black text-right outline-none">
                            <label for="t2">ÖTV/KDV</label><input id="t2" value=",00" class="h-[19px] px-px border border-[#b4c8e4] text-black text-right outline-none"><input aria-label="TL KDV" value="3.400,00" class="ml-1.5 w-[84px] h-[19px] px-px border border-[#b4c8e4] text-black text-right outline-none">
                            <label for="t3">Toplam</label><input id="t3" value="20.400,00" class="col-span-2 h-[19px] px-px border border-[#b4c8e4] text-black text-right outline-none">
                        </div>
                    </div>
                    <div class="w-[226px] border border-[#6593cf]">
                        <h4 class="h-[19px] pl-2.5 leading-[19px] border-b border-[#6593cf] shadow-[inset_1px_1px_0_#fff] bg-linear-to-b from-[#e3efff] to-[#afd2ff]">İşlem</h4>
                        <div class="grid grid-cols-[48px_70px_90px] auto-rows-[19px] items-center pt-[11px] pl-2">
                            <label for="s1">Tutar</label><input id="s1" value="17.000,00" class="col-span-2 h-[19px] px-px border border-[#b4c8e4] bg-white text-black text-right outline-none">
                            <label for="s2">ÖTV/KDV</label><input id="s2" value=",00" class="h-[19px] px-px border border-[#b4c8e4] text-black text-right outline-none"><input aria-label="İşlem KDV" value="3.400,00" class="ml-1.5 w-[84px] h-[19px] px-px border border-[#b4c8e4] text-black text-right outline-none">
                            <label for="s3">Toplam</label><input id="s3" value="20.400,00" class="col-span-2 h-[19px] px-px border border-[#b4c8e4] bg-white text-black text-right outline-none">
                        </div>
                    </div>
                </div>
            </section>
        </div>
    </main>
</body>
</html>
